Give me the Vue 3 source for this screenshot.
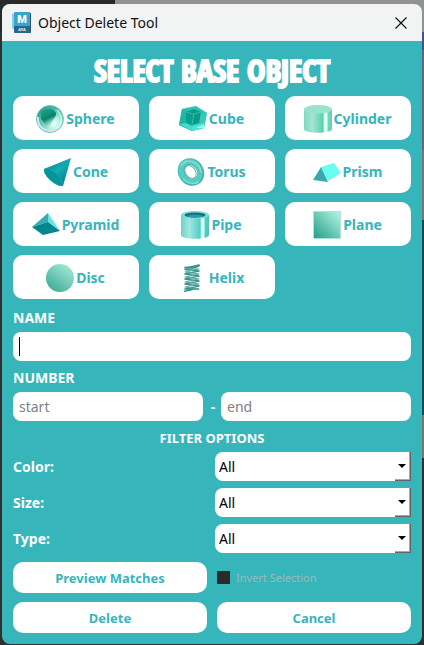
<script setup>
import { ref } from 'vue'

const shapes = ['Sphere', 'Cube', 'Cylinder', 'Cone', 'Torus', 'Prism', 'Pyramid', 'Pipe', 'Plane', 'Disc', 'Helix']
const filters = ['Color', 'Size', 'Type']
const name = ref('')
const start = ref('')
const end = ref('')
</script>

<template>
  <div class="desktop">
    <main class="window">
      <header class="titlebar">
        <svg class="app-icon" viewBox="0 0 20 22" aria-hidden="true">
          <path d="M0 2 3 1V16L1 17Q0 17 0 16Z" fill="#86cfe4" />
          <rect x="2" y="1" width="17" height="20" rx="1" fill="#28668a" />
          <path d="M2 1Q2 0 3 0H18V14H2Z" fill="#38a5cf" />
          <path d="M18 1 19 2V20L18 21Z" fill="#225774" />
          <text x="10" y="11" text-anchor="middle" class="app-letter">M</text>
          <text x="10" y="19" text-anchor="middle" class="app-name">AYA</text>
        </svg>
        <span class="caption">Object Delete Tool</span>
        <button class="close" type="button" aria-label="Close">
          <svg viewBox="0 0 12 12"><path d="M0.500 0.500 11.500 11.500M11.500 0.500 0.500 11.500" stroke="#111" stroke-width="1.200" /></svg>
        </button>
      </header>

      <form class="content" @submit.prevent>
        <h1>SELECT BASE OBJECT</h1>
        <div class="shapes">
          <button v-for="shape in shapes" :key="shape" type="button" class="pill shape">
            <svg class="shape-icon" viewBox="0 0 28 28" aria-hidden="true">
              <template v-if="shape === 'Sphere'">
                <defs>
                  <radialGradient id="sphere-g" cx="65%" cy="68%" r="68%">
                    <stop offset="0" stop-color="#edfffa" /><stop offset=".35" stop-color="#b4f0df" /><stop offset=".7" stop-color="#5cc9b0" /><stop offset="1" stop-color="#2ca790" />
                  </radialGradient>
                  <linearGradient id="sphere-d" x1="0" y1="0" x2=".4" y2="1">
                    <stop offset="0" stop-color="#2aa58c" /><stop offset=".6" stop-color="#07826f" /><stop offset="1" stop-color="#58cdb4" stop-opacity=".2" />
                  </linearGradient>
                </defs>
                <circle cx="14" cy="14" r="13.500" fill="url(#sphere-g)" stroke="#76c6ba" />
                <path d="M5 7C10 2 18 3 20 8C21 13 15 15 14 22C9 24 8 16 5 14Z" fill="url(#sphere-d)" />
                <path d="M2 12C1 22 10 28 18 25" fill="none" stroke="#d9e3f8" stroke-width="2" />
                <path d="M21 5C27 11 27 20 20 24" fill="none" stroke="#d9fff2" stroke-width="1.500" opacity=".7" />
              </template>
              <template v-else-if="shape === 'Cube'">
                <path d="M3 4 17 1 28 8 25 23 13 26 0 20Z" fill="#28c4b2" />
                <path d="M3 4 16 9 13 26 0 20Z" fill="#20b5a5" />
                <path d="M16 9 28 8 25 23 13 26Z" fill="#35cbbb" />
                <path d="M7 7 15 4 22 7 20 18 13 20 7 18Z" fill="#079987" />
                <path d="M7 7 15 9 13 20 7 18Z" fill="#07a18e" />
                <path d="M0 19 7 18 13 21 25 18V23L13 26Z" fill="#58ead9" opacity=".7" />
                <path d="M3 4 17 1 28 8M7 7 15 9 22 7M15 9 13 20" fill="none" stroke="#71d5c6" stroke-width=".7" opacity=".7" />
                <path d="M17 23 25 19 25 23Z" fill="#8effef" />
              </template>
              <template v-else-if="shape === 'Cylinder'">
                <defs><linearGradient id="cylinder-g"><stop offset="0" stop-color="#80d9bd" /><stop offset=".3" stop-color="#a4e6d1" /><stop offset=".68" stop-color="#5bd0ae" /><stop offset=".73" stop-color="#d8fff0" /><stop offset=".82" stop-color="#e1fff6" /><stop offset=".86" stop-color="#68dabb" /><stop offset="1" stop-color="#66cfb1" /></linearGradient></defs>
                <path d="M0 4V24C0 29 28 29 28 24V4Z" fill="url(#cylinder-g)" />
                <ellipse cx="14" cy="4.300" rx="14" ry="4.300" fill="#99e2cd" />
              </template>
              <template v-else-if="shape === 'Cone'">
                <defs><linearGradient id="cone-g" x1=".2" y1=".2" x2=".7" y2=".8"><stop offset="0" stop-color="#118c94" /><stop offset=".5" stop-color="#10aeb1" /><stop offset="1" stop-color="#078a94" /></linearGradient></defs>
                <path d="M1 11 28 0 20 28C14 29 0 18 1 11Z" fill="url(#cone-g)" />
                <ellipse cx="10.500" cy="19" rx="12" ry="4.500" transform="rotate(42 10.500 19)" fill="#08939b" stroke="#22b4b7" stroke-width=".5" />
              </template>
              <template v-else-if="shape === 'Torus'">
                <ellipse cx="14" cy="14" rx="9.300" ry="10.800" transform="rotate(-35 14 14)" fill="none" stroke="#42b5af" stroke-width="7" />
                <ellipse cx="13.500" cy="13.500" rx="9" ry="10.500" transform="rotate(-35 13.500 13.500)" fill="none" stroke="#58cbc2" stroke-width="5" />
                <path d="M4 8Q8 1 16 4T24 15M6 21Q14 28 22 24" fill="none" stroke="#83dcd3" stroke-width="1.500" />
                <ellipse cx="13.500" cy="14" rx="5" ry="7" transform="rotate(-35 13.500 14)" fill="none" stroke="#6eb4b0" stroke-width="1" />
              </template>
              <template v-else-if="shape === 'Prism'">
                <path d="M8 9 21 5 28 15 15 23Z" fill="#69fff0" /><path d="M8 9 15 24 0 22Z" fill="#3ba8b0" />
              </template>
              <template v-else-if="shape === 'Pyramid'">
                <path d="M16 2 0 16 16 11Z" fill="#37aab3" /><path d="M16 2 16 11 28 20Z" fill="#63e6e8" /><path d="M0 16 16 11 28 20 11 24Z" fill="#02858d" />
              </template>
              <template v-else-if="shape === 'Pipe'">
                <defs><linearGradient id="pipe-g"><stop offset="0" stop-color="#6fd1c9" /><stop offset=".3" stop-color="#a1e6df" /><stop offset=".68" stop-color="#51cec7" /><stop offset=".74" stop-color="#d9fffb" /><stop offset=".81" stop-color="#d2fff9" /><stop offset=".87" stop-color="#55cfc7" /><stop offset="1" stop-color="#54beb9" /></linearGradient></defs>
                <path d="M0 4V24C0 29 28 29 28 24V4Z" fill="url(#pipe-g)" /><ellipse cx="14" cy="4" rx="14" ry="4" fill="#77ddd6" />
                <ellipse cx="14" cy="4" rx="10.500" ry="2.500" fill="#156e7d" /><path d="M5 5Q14 2 23 5Q14 8 5 5Z" fill="#3197a7" />
              </template>
              <template v-else-if="shape === 'Plane'">
                <defs><linearGradient id="plane-g" x1="0" y1="1" x2="1" y2="0"><stop offset="0" stop-color="#239c88" /><stop offset="1" stop-color="#b6f7e5" /></linearGradient></defs>
                <rect x=".5" y=".5" width="27" height="27" fill="url(#plane-g)" stroke="#b2e2d5" />
              </template>
              <template v-else-if="shape === 'Disc'">
                <defs><linearGradient id="disc-g" x1=".1" y1="1" x2=".8" y2="0"><stop offset="0" stop-color="#37a793" /><stop offset="1" stop-color="#a5ead7" /></linearGradient></defs>
                <circle cx="14" cy="14" r="14" fill="url(#disc-g)" />
              </template>
              <template v-else>
                <path d="M6 3.500Q12 3.500 20 1Q22 3 6 5.500L20 7 6 10 20 12 6 15 20 17 6 20 20 22 6 25 20 25M5 27.500 15 25" fill="none" stroke="#3a928b" stroke-width="1.500" stroke-linejoin="round" />
                <path d="M6 3Q3 5 20 5L6 8 20 10 6 13 20 15 6 18 20 20 6 23 20 25" fill="none" stroke="#55aaa2" stroke-width="1.100" stroke-linejoin="round" />
              </template>
            </svg>
            <span>{{ shape }}</span>
          </button>
        </div>

        <label class="heading" for="name">NAME</label>
        <input id="name" v-model="name" class="field name-field" type="text" placeholder=" " />
        <label class="heading" for="start">NUMBER</label>
        <div class="range">
          <input id="start" v-model="start" class="field" type="text" placeholder="start" />
          <span class="dash">-</span>
          <input v-model="end" class="field" type="text" placeholder="end" aria-label="Number end" />
        </div>

        <h2 class="heading">FILTER OPTIONS</h2>
        <div class="filters">
          <div v-for="filter in filters" :key="filter" class="filter">
            <label :for="filter">{{ filter }}:</label>
            <div class="select-box">
              <select :id="filter"><option>All</option></select>
              <span class="arrow"></span>
            </div>
          </div>
        </div>

        <div class="actions">
          <button type="button" class="pill">Preview Matches</button>
          <label class="invert"><input type="checkbox" disabled /><span>Invert Selection</span></label>
          <button type="button" class="pill">Delete</button>
          <button type="button" class="pill">Cancel</button>
        </div>
      </form>
    </main>
  </div>
</template>

<style>
body { background: #2c2c2d; }
</style>

<style scoped>
* { box-sizing: border-box; }
.desktop {
  padding: 4px 2px 1px;
  font-family: "Noto Sans", "Open Sans", sans-serif;
  background:
    linear-gradient(#929292 0 32px, #405580 32px 50px, #626879 50px 150px, #777 150px 220px, #064d58 220px 415px, #777966 415px 458px, #303033 458px) right / 10px 100% no-repeat,
    linear-gradient(90deg, #292929 0 115px, #929292 115px) top / 100% 32px no-repeat,
    #303031;
}
.window { border-radius: 8px; overflow: hidden; background: #36b5bb; }
.titlebar {
  display: flex;
  align-items: center;
  height: 37px;
  padding: 0 14px 0 10px;
  background: #f2f3f3;
}
.app-icon { width: 20px; height: 22px; }
.app-letter { font: 900 11px Roboto, sans-serif; fill: #fff; }
.app-name { font: 700 4px Roboto, sans-serif; fill: #fff; }
.caption { flex: 1; margin-left: 6px; font-size: 14px; color: #111; }
.close { display: grid; width: 14px; height: 14px; padding: 1px; border: 0; background: none; }
.close svg { width: 12px; height: 12px; }
.content { padding: 11px; }
h1 {
  margin: 0 0 8px;
  font: 900 31px/36px Impact, "Noto Sans ExtraCondensed", "Open Sans Condensed", "Roboto Condensed", "Noto Sans Condensed", Roboto, sans-serif;
  text-align: center;
  color: #fff;
  -webkit-text-stroke: 2px #fff;
}
.shapes { display: grid; grid-template-columns: repeat(3, 1fr); gap: 9px 10px; }
.pill {
  height: 31px;
  padding: 0;
  border: 0;
  border-radius: 10px;
  background: #fff;
  color: #36b5bb;
  font: bold 14px "Noto Sans", "Open Sans", sans-serif;
}
.shape { display: flex; align-items: center; justify-content: center; gap: 2px; height: 44px; padding: 1px 1px 0 0; }
.shape-icon { width: 28px; height: 28px; flex: none; }
.heading {
  display: block;
  margin: 9px 0 4px;
  color: #fff;
  font: bold 14px/20px "Noto Sans", "Open Sans", sans-serif;
}
h2.heading { margin: 7px 0 4px; text-align: center; font-size: 13px; }
.field {
  display: block;
  width: 100%;
  min-width: 0;
  height: 29px;
  padding: 0 6px;
  border: 0;
  border-radius: 8px;
  outline: 0;
  background: #fff;
  color: #000;
  font: 14px "Noto Sans", "Open Sans", sans-serif;
}
.field::placeholder { color: #808080; }
.name-field:placeholder-shown {
  background: linear-gradient(#000, #000) 6px 5px / 1px 19px no-repeat, #fff;
}
.name-field + .heading { margin-top: 7px; }
.range { display: grid; grid-template-columns: 1fr 18px 1fr; align-items: center; }
.dash { padding-left: 2px; text-align: center; color: #fff; font-weight: bold; font-size: 14px; }
.filters { display: grid; gap: 7px; }
.filter { display: grid; grid-template-columns: 202px 1fr; align-items: center; color: #fff; font-size: 14px; font-weight: bold; }
.select-box { position: relative; }
select {
  display: block;
  width: 100%;
  height: 29px;
  padding: 0 20px 0 4px;
  border: 0;
  border-radius: 8px 0 0 8px;
  appearance: none;
  background: #fff;
  color: #000;
  font: 14px "Noto Sans", "Open Sans", sans-serif;
}
.arrow {
  position: absolute;
  top: 0;
  right: 0;
  bottom: 0;
  width: 16px;
  border-right: 1px solid #646464;
  border-bottom: 1px solid #646464;
  box-shadow: inset -1px -1px #a8a8a8;
  pointer-events: none;
}
.arrow::after {
  content: "";
  position: absolute;
  top: 12px;
  right: 4px;
  border: 4px solid transparent;
  border-top-color: #000;
  border-bottom: 0;
}
.actions { display: grid; grid-template-columns: 1fr 1fr; gap: 9px 10px; margin-top: 9px; }
.actions .pill { font-size: 13px; }
.invert { display: flex; align-items: center; gap: 6px; color: #9dbabc; font-size: 11px; }
.invert input { width: 13px; height: 13px; margin: 0; appearance: none; background: #2b2b2b; }
</style>
